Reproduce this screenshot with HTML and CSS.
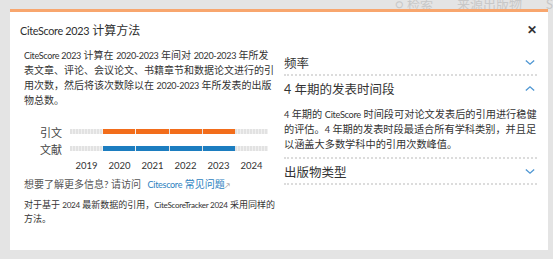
FILE: index.html
```html
<!DOCTYPE html>
<html lang="zh-CN">

<head>
    <meta charset="UTF-8">
    <title>CiteScore 2023 计算方法</title>
    <link rel="stylesheet" href="styles.css">
</head>

<body>

    <!-- Fond de page -->
    <div class="page-top">
        <span class="page-link">&#9675; 检索</span>
        <span class="page-link">来源出版物</span>
        <span class="page-link">S</span>
    </div>

    <!-- Fenêtre -->
    <div class="modal">
        <div class="modal-head">
            <div class="modal-title"><span class="lat">CiteScore 2023</span> 计算方法</div>
            <div class="close">&#10005;</div>
        </div>

        <div class="modal-body">
            <div class="col-left">
                <p class="intro"><span class="lat">CiteScore 2023</span> 计算在 <span class="lat">2020-2023</span> 年间对 <span class="lat">2020-2023</span> 年所发<br>表文章、评论、会议论文、书籍章节和数据论文进行的引<br>用次数，然后将该次数除以在 <span class="lat">2020-2023</span> 年所发表的出版<br>物总数。</p>

                <div class="chart">
                    <div class="chart-label">引文</div>
                    <div class="track">
                        <span></span>
                        <span class="orange"></span>
                        <span class="orange"></span>
                        <span class="orange"></span>
                        <span class="orange"></span>
                        <span></span>
                    </div>
                    <div class="chart-label">文献</div>
                    <div class="track">
                        <span></span>
                        <span class="blue"></span>
                        <span class="blue"></span>
                        <span class="blue"></span>
                        <span class="blue"></span>
                        <span></span>
                    </div>
                    <div></div>
                    <div class="years">
                        <span>2019</span>
                        <span>2020</span>
                        <span>2021</span>
                        <span>2022</span>
                        <span>2023</span>
                        <span>2024</span>
                    </div>
                </div>

                <p class="more">想要了解更多信息? 请访问 <a href="#"><span class="lat">Citescore</span> 常见问题<span class="ext">&#8599;</span></a></p>

                <p class="note">对于基于 <span class="lat">2024</span> 最新数据的引用，<span class="lat">CiteScoreTracker 2024</span> 采用同样的<br>方法。</p>
            </div>

            <div class="col-right">
                <div class="section">
                    <div class="section-head">
                        <span>频率</span>
                        <svg class="chevron" viewBox="0 0 12 8"><path d="M1 1.5 L6 6 L11 1.5" /></svg>
                    </div>
                </div>
                <div class="section">
                    <div class="section-head">
                        <span>4 年期的发表时间段</span>
                        <svg class="chevron" viewBox="0 0 12 8"><path d="M1 6.5 L6 2 L11 6.5" /></svg>
                    </div>
                    <p class="section-text"><span class="lat">4</span> 年期的 <span class="lat">CiteScore</span> 时间段可对论文发表后的引用进行稳健<br>的评估。<span class="lat">4</span> 年期的发表时段最适合所有学科类别，并且足<br>以涵盖大多数学科中的引用次数峰值。</p>
                </div>
                <div class="section">
                    <div class="section-head">
                        <span>出版物类型</span>
                        <svg class="chevron" viewBox="0 0 12 8"><path d="M1 1.5 L6 6 L11 1.5" /></svg>
                    </div>
                </div>
            </div>
        </div>
    </div>

</body>

</html>
```

FILE: styles.css
```css
/* Style général */
body {
    margin: 0;
    padding: 0 5px 0 10px;
    background-color: #e4e4e4;
    font-family: Lato, "Noto Sans CJK SC", sans-serif;
    color: #333;
    height: 259px;
    overflow: hidden;
}

/* Texte latin plus étroit que le chinois */
.lat {
    font-size: 0.9em;
    letter-spacing: -0.3px;
}

/* Fond */
.page-top {
    height: 9px;
    overflow: hidden;
    display: flex;
    justify-content: flex-end;
    gap: 24px;
    margin-right: -5px;
}

.page-link {
    font-size: 13px;
    line-height: 12px;
    margin-top: -2px;
    color: #c8c8c8;
}

/* Fenêtre */
.modal {
    width: 538px;
    height: 241px;
    background-color: #fff;
    border-top: 3px solid #f8a66e;
    box-sizing: border-box;
}

.modal-head {
    display: flex;
    justify-content: space-between;
    align-items: center;
    padding: 6px 11px 0 10px;
    height: 22px;
}

.modal-title {
    font-size: 12px;
    color: #2e2e2e;
}

.close {
    font-size: 12px;
    color: #333;
    font-weight: bold;
}

.modal-body {
    display: flex;
    gap: 14px;
    padding: 0 15px 0 14px;
}

.col-left {
    width: 246px;
    flex-shrink: 0;
    padding-top: 8px;
}

.col-right {
    flex-grow: 1;
    padding-top: 10px;
}

p {
    margin: 0;
}

.intro {
    font-size: 10px;
    line-height: 15px;
    color: #333;
    white-space: nowrap;
}

/* Graphique */
.chart {
    display: grid;
    grid-template-columns: 38px 198px;
    grid-auto-rows: 17px;
    column-gap: 8px;
    align-items: center;
    margin-top: 15px;
}

.chart-label {
    text-align: right;
    font-size: 11px;
    color: #444;
}

.track {
    display: grid;
    grid-template-columns: repeat(6, 1fr);
    gap: 1px;
    height: 5px;
    background: repeating-linear-gradient(90deg, #e2e2e2 0 2px, #f0f0f0 2px 3px);
}

.track span.orange {
    background-color: #f26d1b;
}

.track span.blue {
    background-color: #1c7dc0;
}

.years {
    display: grid;
    grid-template-columns: repeat(6, 1fr);
    text-align: center;
    font-size: 9.5px;
    color: #333;
}

.more {
    margin-top: 3px;
    font-size: 10px;
    line-height: 14px;
    color: #555;
    white-space: nowrap;
}

.more a {
    color: #2d7fc0;
    text-decoration: none;
    margin-left: 4px;
}

.ext {
    font-size: 7px;
    color: #888;
}

.note {
    margin-top: 6px;
    font-size: 9px;
    line-height: 14px;
    color: #333;
    white-space: nowrap;
}

/* Colonne droite */
.section {
    border-bottom: 2px dotted #dcdcdc;
}

.section-head {
    display: flex;
    justify-content: space-between;
    align-items: center;
    height: 24px;
    font-size: 12.5px;
    color: #333;
}

.chevron {
    width: 10px;
    height: 7px;
    margin-right: 2px;
    fill: none;
    stroke: #4f97d3;
    stroke-width: 1.6;
}

.section-text {
    font-size: 10.2px;
    line-height: 14px;
    color: #333;
    white-space: nowrap;
    padding: 7px 0 6px 0;
}
```
